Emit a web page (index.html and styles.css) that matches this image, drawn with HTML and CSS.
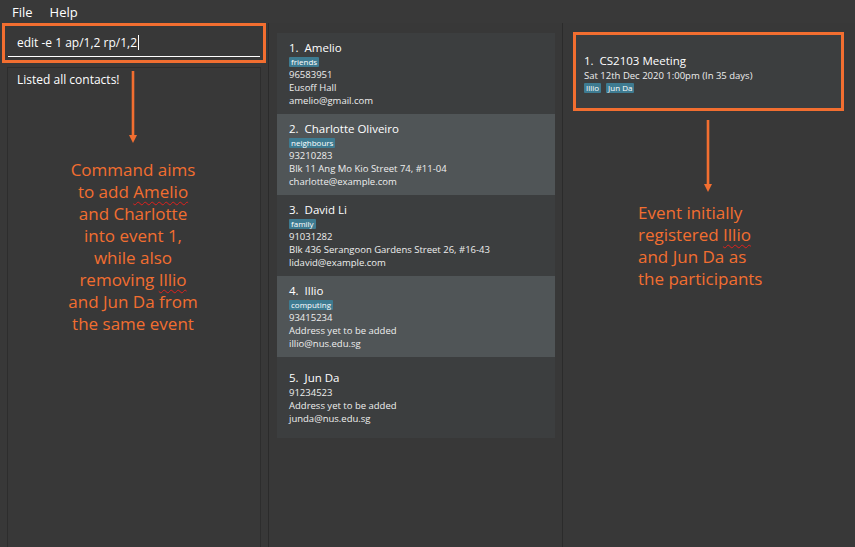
FILE: index.html
```html
<!DOCTYPE html>
<html lang="en">
<head>
<meta charset="utf-8">
<title>Address App</title>
<link rel="stylesheet" href="styles.css">
</head>
<body>
<div class="app">
  <nav class="menubar">
    <span class="menu">File</span>
    <span class="menu">Help</span>
  </nav>
  <main class="main">
    <section class="col col-left">
      <div class="cmd-frame">
        <div class="cmd-field">edit -e 1 ap/1,2 rp/1,2<span class="caret"></span></div>
      </div>
      <div class="result">Listed all contacts!</div>
    </section>
    <section class="col col-mid">
      <ul class="list">
        <li class="card">
          <div class="name">1.&nbsp; Amelio</div>
          <div class="tags"><span class="tag">friends</span></div>
          <div class="line">96583951</div>
          <div class="line">Eusoff Hall</div>
          <div class="line">amelio@gmail.com</div>
        </li>
        <li class="card card-alt">
          <div class="name">2.&nbsp; Charlotte Oliveiro</div>
          <div class="tags"><span class="tag">neighbours</span></div>
          <div class="line">93210283</div>
          <div class="line">Blk 11 Ang Mo Kio Street 74, #11-04</div>
          <div class="line">charlotte@example.com</div>
        </li>
        <li class="card">
          <div class="name">3.&nbsp; David Li</div>
          <div class="tags"><span class="tag">family</span></div>
          <div class="line">91031282</div>
          <div class="line">Blk 436 Serangoon Gardens Street 26, #16-43</div>
          <div class="line">lidavid@example.com</div>
        </li>
        <li class="card card-alt">
          <div class="name">4.&nbsp; Illio</div>
          <div class="tags"><span class="tag">computing</span></div>
          <div class="line">93415234</div>
          <div class="line">Address yet to be added</div>
          <div class="line">illio@nus.edu.sg</div>
        </li>
        <li class="card">
          <div class="name">5.&nbsp; Jun Da</div>
          <div class="line">91234523</div>
          <div class="line">Address yet to be added</div>
          <div class="line">junda@nus.edu.sg</div>
        </li>
      </ul>
    </section>
    <section class="col col-right">
      <div class="event-frame">
        <div class="event-card">
          <div class="name">1.&nbsp; CS2103 Meeting</div>
          <div class="event-date">Sat 12th Dec 2020 1:00pm (In 35 days)</div>
          <div class="tags event-tags"><span class="tag">Illio</span><span class="tag">Jun Da</span></div>
        </div>
      </div>
    </section>
  </main>
</div>

<div class="note note-left">
  <svg class="arrow arrow-left" width="12" height="73" viewBox="0 0 12 73">
    <line x1="6" y1="0" x2="6" y2="65" stroke="#f26e30" stroke-width="2.6"/>
    <polygon points="2,64 10,64 6,72" fill="#f26e30"/>
  </svg>
  <p class="note-text note-text-left">Command aims<br>to add <span class="typo">Amelio</span><br>and Charlotte<br>into event 1,<br>while also<br>removing <span class="typo">Illio</span><br>and Jun Da from<br>the same event</p>
</div>

<div class="note note-right">
  <svg class="arrow arrow-right" width="12" height="73" viewBox="0 0 12 73">
    <line x1="6" y1="0" x2="6" y2="65" stroke="#f26e30" stroke-width="2.6"/>
    <polygon points="2,64 10,64 6,72" fill="#f26e30"/>
  </svg>
  <p class="note-text note-text-right">Event initially<br>registered <span class="typo">Illio</span><br>and Jun Da as<br>the participants</p>
</div>
</body>
</html>
```

FILE: styles.css
```css
* {
  box-sizing: border-box;
  margin: 0;
  padding: 0;
}

html, body {
  width: 855px;
  height: 547px;
  overflow: hidden;
  background: #383838;
}

body {
  position: relative;
  font-family: "Open Sans", "Noto Sans", sans-serif;
  color: #ffffff;
}

.app {
  display: flex;
  flex-direction: column;
  height: 547px;
}

/* Menu bar */
.menubar {
  height: 23px;
  display: flex;
  align-items: center;
  gap: 17px;
  padding-left: 12px;
  font-size: 13px;
  color: #ffffff;
  background: #393939;
}

/* Main three columns */
.main {
  flex: 1;
  display: flex;
  min-height: 0;
}

.col {
  display: flex;
  flex-direction: column;
}

.col-left {
  width: 269px;
  border-right: 1px solid #2b2b2b;
}

.col-mid {
  width: 294px;
  padding: 10px 0 0 8px;
  border-right: 1px solid #2b2b2b;
}

.col-right {
  flex: 1;
  padding: 9px 0 0 10px;
}

/* Command box */
.cmd-frame {
  width: 264px;
  height: 40px;
  margin-left: 2px;
  border: 3px solid #f26e30;
  padding: 3px 3px 0 3px;
}

.cmd-field {
  height: 28px;
  display: flex;
  align-items: center;
  padding-left: 9px;
  border-bottom: 1px solid #ffffff;
  font-size: 12px;
  color: #ffffff;
  white-space: pre;
}

.caret {
  display: inline-block;
  width: 1px;
  height: 15px;
  margin-left: 1px;
  background: #ffffff;
}

/* Result display */
.result {
  flex: 1;
  width: 254px;
  margin: 4px 0 0 7px;
  border: 1px solid #2d2d2d;
  border-bottom: none;
  padding: 4px 0 0 9px;
  font-size: 12px;
  line-height: 16px;
  color: #ffffff;
}

/* Person list */
.list {
  list-style: none;
  width: 278px;
}

.card {
  height: 81px;
  display: flex;
  flex-direction: column;
  justify-content: center;
  padding-left: 12px;
  background: #3c3e3f;
}

.card-alt {
  background: #505557;
}

.name {
  font-size: 11.5px;
  line-height: 16px;
  color: #ffffff;
  white-space: pre;
}

.tags {
  display: flex;
  gap: 5px;
  height: 10px;
  margin: 1px 0;
}

.tag {
  display: inline-block;
  height: 10px;
  padding: 0 2px;
  border-radius: 1px;
  background: #3e7b91;
  font-size: 8px;
  line-height: 10px;
  color: #ffffff;
}

.line {
  font-size: 9.5px;
  line-height: 13px;
  color: #eeeeee;
  white-space: nowrap;
}

/* Event list */
.event-frame {
  width: 271px;
  height: 79px;
  border: 3px solid #f26e30;
}

.event-card {
  height: 100%;
  padding: 18px 0 0 8px;
  background: #3c3e3f;
}

.event-date {
  font-size: 9.5px;
  line-height: 13px;
  color: #eeeeee;
}

.event-tags {
  margin-top: 1px;
}

/* Annotation overlays */
.note {
  position: absolute;
}

.note-left {
  left: 33px;
  top: 71px;
  width: 200px;
}

.note-right {
  left: 600px;
  top: 120px;
  width: 220px;
}

.arrow {
  display: block;
}

.arrow-left {
  margin-left: 94px;
}

.arrow-right {
  margin-left: 102px;
}

.note-text {
  font-family: "Open Sans", "Noto Sans", sans-serif;
  font-size: 17px;
  line-height: 22px;
  color: #f26e30;
}

.note-text-left {
  margin-top: 15px;
  text-align: center;
}

.note-text-right {
  margin-top: 9px;
  margin-left: 38px;
  text-align: left;
}

.typo {
  text-decoration: underline wavy #e0201c;
  text-decoration-thickness: 1px;
  text-underline-offset: 3px;
}
```
